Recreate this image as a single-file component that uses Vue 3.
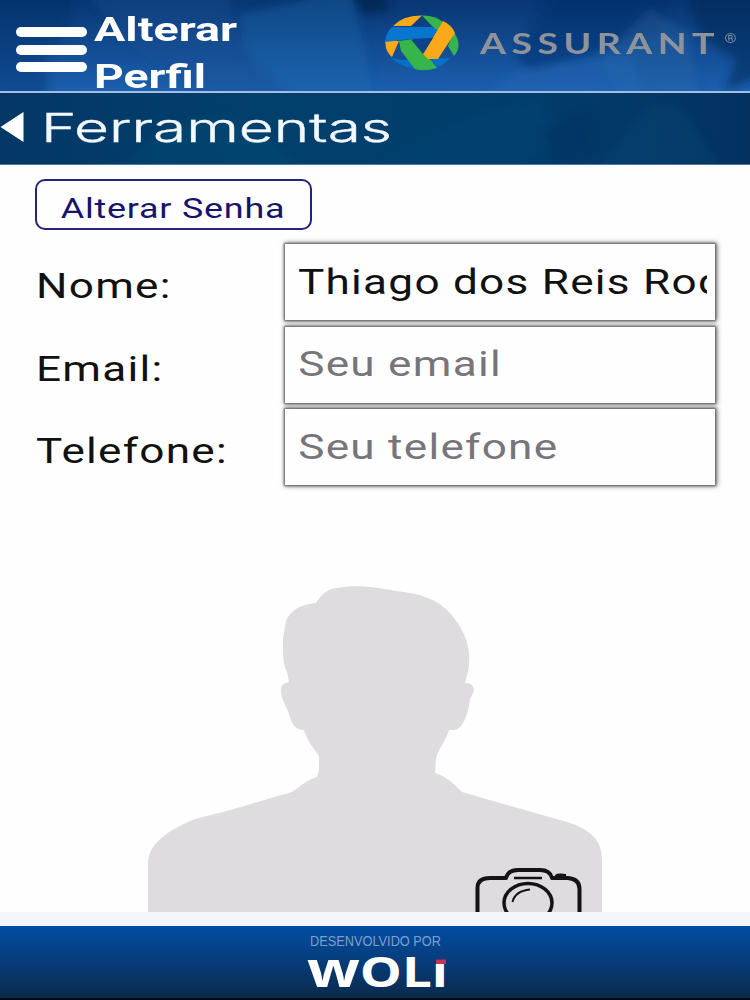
<script setup>
import { ref } from 'vue';

const fields = ref([
    { id: 'nome', label: 'Nome:', type: 'text', value: 'Thiago dos Reis Rodrigues', placeholder: 'Seu nome' },
    { id: 'email', label: 'Email:', type: 'email', value: '', placeholder: 'Seu email' },
    { id: 'telefone', label: 'Telefone:', type: 'tel', value: '', placeholder: 'Seu telefone' },
]);
</script>

<template>
    <div class="page">
        <header class="header">
            <svg class="backdrop" viewBox="0 0 750 165" preserveAspectRatio="none">
                <defs>
                    <linearGradient id="sky" x1="0" y1="0" x2="0" y2="1">
                        <stop offset="0" stop-color="#083673" />
                        <stop offset="1" stop-color="#1c60af" />
                    </linearGradient>
                    <linearGradient id="sub" x1="0" y1="0" x2="1" y2="0">
                        <stop offset="0" stop-color="#043766" />
                        <stop offset="0.35" stop-color="#02406c" />
                        <stop offset="0.7" stop-color="#023d6c" />
                        <stop offset="1" stop-color="#033261" />
                    </linearGradient>
                    <filter id="soft"><feGaussianBlur stdDeviation="4" /></filter>
                </defs>
                <rect width="750" height="92" fill="url(#sky)" />
                <g filter="url(#soft)">
                    <path d="M-20 -20H75L70 25 45 60 50 110H-20Z" fill="#062d68" opacity=".4" />
                    <path d="M75 -20H225L240 50 310 110H220L130 45Z" fill="#164f91" opacity=".35" />
                    <path d="M240 15 350 -10 365 50 375 110H310L245 50Z" fill="#2269ac" opacity=".35" />
                    <path d="M345 -10H380L390 10 365 15Z" fill="#052453" opacity=".8" />
                    <path d="M560 -20H680L660 30 600 50 530 72 515 55Z" fill="#092e6b" opacity=".45" />
                    <path d="M650 10 690 35 700 110H630L600 60Z" fill="#2868a7" opacity=".35" />
                    <path d="M680 -20H770V70L725 92 735 60 700 35Z" fill="#062658" opacity=".55" />
                    <path d="M460 110 520 70 630 55 650 110Z" fill="#2068b7" opacity=".4" />
                </g>
                <rect y="93" width="750" height="72" fill="url(#sub)" />
                <g filter="url(#soft)" opacity=".25">
                    <path d="M120 165 170 125 230 115 300 165Z" fill="#06527d" />
                    <path d="M380 165 470 115 540 98 560 140 520 165Z" fill="#02497a" />
                    <path d="M600 165 650 105 680 105 720 165Z" fill="#07517d" />
                    <path d="M540 130 590 110 600 150 560 165Z" fill="#032a5c" />
                </g>
                <rect y="91" width="750" height="2" fill="#a5bde2" />
                <rect y="164.400" width="750" height="1" fill="#7f9fc2" />
            </svg>
            <div class="top-bar">
                <button class="menu" aria-label="Menu">
                    <span></span>
                    <span></span>
                    <span></span>
                </button>
                <svg class="title" width="160" height="91" viewBox="0 0 160 91">
                    <text x="7" y="41" textLength="143" lengthAdjust="spacingAndGlyphs">Alterar</text>
                    <text x="7" y="87.500" textLength="112" lengthAdjust="spacingAndGlyphs">Perfil</text>
                </svg>
                <svg class="brand" width="370" height="91" viewBox="380 0 370 91">
                    <path d="M393 26Q403 15 422 15.500L411 26Z" fill="#fba919" />
                    <path d="M385 40 386 48Q388 54 392 57L399 41Z" fill="#fba919" />
                    <path d="M422 15.500Q435 15 443 22L438 32 433 27Z" fill="#38b54a" />
                    <path d="M454 32Q463 46 454 56L448 46Z" fill="#38b54a" />
                    <path d="M390 57 400 60 450 58Q442 68 426 70 402 69 390 57Z" fill="#0870c4" />
                    <path d="M392 27 432 27 438 30 432 38 410 39 385 42Q386 32 392 27Z" fill="#0875cf" />
                    <path d="M399 41 413 39 437 68Q424 72 415 69L401 51Z" fill="#38b54a" />
                    <path d="M443 21Q452 25 455 33L438 59H428L423 54Z" fill="#fba919" />
                    <path d="M411 39.500 433 38 423 54Z" fill="#0d438d" />
                    <text class="brand-name" x="480" y="53.500" textLength="240" lengthAdjust="spacingAndGlyphs">ASSURANT</text>
                    <text class="brand-mark" x="724.500" y="42.500" textLength="12" lengthAdjust="spacingAndGlyphs">®</text>
                </svg>
            </div>
            <div class="sub-bar">
                <svg width="400" height="72" viewBox="0 93 400 72">
                    <path d="M0.500 127 23.500 112V142Z" fill="#fff" />
                    <text class="section" x="41" y="141.500" textLength="351" lengthAdjust="spacingAndGlyphs">Ferramentas</text>
                </svg>
            </div>
        </header>

        <main class="content">
            <button class="password"><span>Alterar Senha</span></button>
            <form class="form" @submit.prevent>
                <div v-for="field in fields" :key="field.id" class="row">
                    <label :for="field.id"><span>{{ field.label }}</span></label>
                    <div class="field">
                        <div class="clip">
                            <input :id="field.id" v-model="field.value" :type="field.type" :placeholder="field.placeholder">
                        </div>
                    </div>
                </div>
            </form>
            <svg class="photo" width="490" height="342" viewBox="130 570 490 342">
                <path
                    fill="#dfdce0"
                    d="M148 912V862C149 846 163 832 195 819L223 812 292 792C302 785 307 780 317 777L319 770V756C313 747 307 741 304 730 295 730 292 725 288 711 283 700 281 698 281 690 281 684 285 683 289 682L287 672C283 665 283 656 283 640 284 630 286 623 286 621 290 612 297 605 316 603 322 593 329 589 336 588 354 585 371 586 395 591 424 594 437 600 449 612 463 627 471 646 469 663 469 670 467 676 465 683 472 683 474 686 474 691L470 699C468 716 462 730 454 730H449C446 741 440 746 436 758L435 773C445 776 451 781 462 792L500 803 560 820C591 828 602 840 602 860V912Z"
                />
                <g fill="none" stroke="#151316" stroke-width="4" stroke-linejoin="round">
                    <path d="M477.500 914V888Q477.500 878 490 878H506Q508 870 518 870H540Q550 870 552 878H568Q579.500 879 579.500 889V914" />
                    <ellipse cx="528" cy="903" rx="24" ry="19.500" stroke-width="3.500" />
                    <path d="M514 878H542" stroke-width="2.500" />
                    <path d="M512.500 902Q515 891 530 889.500" stroke-width="2" />
                    <path d="M556 876.500Q558 875 566 876" stroke-width="4" />
                </g>
            </svg>
        </main>

        <footer class="footer">
            <svg width="160" height="72" viewBox="300 926 160 72">
                <text class="credit" x="310" y="946" textLength="131" lengthAdjust="spacingAndGlyphs">DESENVOLVIDO POR</text>
                <text class="woli" x="307" y="987" textLength="141" lengthAdjust="spacingAndGlyphs"><tspan class="woli-w">w</tspan>OLı</text>
                <rect x="436" y="959.500" width="10" height="4.500" fill="#c5354e" />
            </svg>
        </footer>
    </div>
</template>

<style>
body {
    margin: 0;
    background: #fff;
}
</style>

<style scoped>
.page {
    width: 750px;
    height: 1000px;
    display: flex;
    flex-direction: column;
    overflow: hidden;
    background: #fefeff;
    font-family: Roboto, "Liberation Sans", sans-serif;
}
svg {
    display: block;
    overflow: visible;
}
button {
    padding: 0;
    border: none;
    background: none;
    font-family: inherit;
}
.header {
    position: relative;
    height: 165px;
    flex: none;
}
.backdrop {
    position: absolute;
    inset: 0;
    width: 750px;
    height: 165px;
    overflow: hidden;
}
.top-bar,
.sub-bar {
    position: relative;
    display: flex;
}
.top-bar {
    height: 93px;
}
.sub-bar {
    height: 72px;
}
.menu {
    width: 71px;
    height: 45px;
    margin: 27px 0 0 16px;
    display: flex;
    flex-direction: column;
    justify-content: space-between;
}
.menu span {
    width: 71px;
    height: 10px;
    border-radius: 5px;
    background: #fff;
}
.title {
    fill: #fff;
    font-size: 34px;
    font-weight: 700;
}
.brand {
    margin-left: auto;
}
.brand-name {
    fill: #8e929b;
    font-family: Lato, sans-serif;
    font-size: 28px;
    font-weight: 700;
    letter-spacing: 4px;
}
.brand-mark {
    fill: #8492aa;
    font-size: 13px;
}
.section {
    fill: #f2f8fd;
    font-family: Inter, sans-serif;
    font-size: 40px;
    font-weight: 300;
    stroke: #f2f8fd;
    stroke-width: 0.400px;
}
.content {
    height: 747px;
    flex: none;
    display: flex;
    flex-direction: column;
}
.password {
    box-sizing: border-box;
    width: 277px;
    height: 51px;
    flex: none;
    margin: 14px 0 0 35px;
    padding-top: 7px;
    border: 2px solid #25237a;
    border-radius: 10px;
    color: #17136c;
    font-size: 28.500px;
    line-height: 42px;
}
.password span {
    display: inline-block;
    letter-spacing: 0.600px;
    transform: scaleX(1.26);
}
.form {
    display: flex;
    flex-direction: column;
    gap: 6.500px;
    margin: 14px 35px 0 36px;
}
.row {
    display: flex;
    justify-content: space-between;
    height: 76px;
}
.row label {
    padding-top: 3px;
    font-size: 35px;
    line-height: 79px;
    color: #111;
}
.row label span {
    display: inline-block;
    letter-spacing: 1px;
    transform: scaleX(1.26);
    transform-origin: left;
}
.field {
    box-sizing: border-box;
    width: 430px;
    height: 76px;
    padding: 0 8px 0 12px;
    background: #fefeff;
    box-shadow: 0 0 2px 1px #666267, 1px 0 5px 1px #777;
}
.clip {
    height: 76px;
    overflow: hidden;
}
.field input {
    box-sizing: border-box;
    width: 330px;
    height: 76px;
    padding: 0 0 0 1px;
    border: none;
    outline: none;
    background: transparent;
    color: #111;
    font-family: inherit;
    font-size: 35px;
    letter-spacing: 1px;
    transform: scaleX(1.26);
    transform-origin: left;
}
.field input::placeholder {
    color: #77757a;
    opacity: 1;
}
.photo {
    margin: auto 0 0 130px;
}
.footer {
    display: flex;
    justify-content: center;
    height: 72px;
    border-top: 14px solid #f5f6fc;
    border-bottom: 2px solid #020a18;
    background: linear-gradient(#034da3, #063c79 50%, #0b2a4b) padding-box;
}
.footer svg {
    margin-left: 10px;
}
.credit {
    fill: #7da0cb;
    font-family: "Liberation Sans", sans-serif;
    font-size: 14px;
}
.woli {
    fill: #fff;
    font-family: "Open Sans", sans-serif;
    font-size: 42px;
    font-weight: 700;
}
.woli-w {
    font-size: 49px;
}
</style>
